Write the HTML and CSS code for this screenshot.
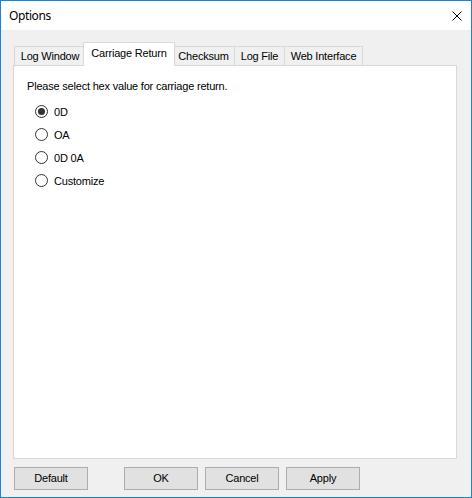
FILE: index.html
```html
<!DOCTYPE html>
<html>
<head>
<meta charset="utf-8">
<link rel="stylesheet" href="styles.css">
</head>
<body>
<div class="window">
  <div class="titlebar">
    <span class="title">Options</span>
    <svg class="close" width="10" height="10" viewBox="0 0 10 10"><path d="M0.5 0.5 L9.5 9.5 M9.5 0.5 L0.5 9.5" stroke="#000" stroke-width="1" fill="none"/></svg>
  </div>
  <div class="body">
    <div class="tabs">
      <div class="tab t1">Log Window</div>
      <div class="tab t2 active">Carriage Return</div>
      <div class="tab t3">Checksum</div>
      <div class="tab t4">Log File</div>
      <div class="tab t5">Web Interface</div>
    </div>
    <div class="panel">
      <div class="prompt">Please select hex value for carriage return.</div>
      <div class="radios">
        <div class="radio-row"><span class="radio checked"></span><span class="label">0D</span></div>
        <div class="radio-row"><span class="radio"></span><span class="label">OA</span></div>
        <div class="radio-row"><span class="radio"></span><span class="label">0D 0A</span></div>
        <div class="radio-row"><span class="radio"></span><span class="label">Customize</span></div>
      </div>
    </div>
    <div class="buttons">
      <div class="btn btn-default">Default</div>
      <div class="btn btn-ok">OK</div>
      <div class="btn">Cancel</div>
      <div class="btn">Apply</div>
    </div>
  </div>
</div>
</body>
</html>
```
FILE: styles.css
```css
html, body {
  margin: 0;
  padding: 0;
}
body {
  width: 472px;
  height: 498px;
  font-family: "Liberation Sans", Arial, sans-serif;
  font-size: 11px;
  letter-spacing: -0.2px;
  color: #000;
}
.window {
  box-sizing: border-box;
  width: 472px;
  height: 498px;
  border: 1px solid #1883d7;
  background: #f0f0f0;
  display: flex;
  flex-direction: column;
}
.titlebar {
  height: 29px;
  background: #fff;
  display: flex;
  align-items: center;
  justify-content: space-between;
  padding: 0 9px 0 8px;
}
.title {
  font-family: "Noto Sans", "Open Sans", sans-serif;
  font-size: 12px;
  letter-spacing: -0.4px;
}
.close {
  display: block;
}
.body {
  flex: 1;
  display: flex;
  flex-direction: column;
  padding: 12px 0 7px 12px;
}
.tabs {
  display: flex;
  align-items: flex-end;
  height: 23px;
  margin-left: 1px;
}
.tab {
  box-sizing: border-box;
  height: 19px;
  border: 1px solid #d9d9d9;
  border-bottom: 0;
  margin-left: -1px;
  text-align: center;
  line-height: 18px;
  white-space: nowrap;
  background: #f0f0f0;
}
.t1 { width: 72px; margin-left: 0; }
.t3 { width: 63px; }
.t4 { width: 51px; }
.t5 { width: 79px; }
.tab.active {
  width: 92px;
  height: 24px;
  margin: 0 -2px -1px -3px;
  padding-top: 1px;
  background: #fff;
  position: relative;
  z-index: 1;
}
.panel {
  box-sizing: border-box;
  width: 444px;
  height: 394px;
  border: 1px solid #d9d9d9;
  background: #fff;
  padding: 14px 0 0 13px;
}
.prompt {
  line-height: 13px;
}
.radios {
  margin-top: 7px;
}
.radio-row {
  height: 23px;
  display: flex;
  align-items: center;
  padding-left: 8px;
}
.radio {
  box-sizing: border-box;
  width: 13px;
  height: 13px;
  border: 1px solid #333;
  border-radius: 50%;
  margin-right: 6px;
  display: flex;
  align-items: center;
  justify-content: center;
}
.radio.checked::after {
  content: "";
  width: 7px;
  height: 7px;
  border-radius: 50%;
  background: #333;
}
.buttons {
  display: flex;
  margin-top: 8px;
  margin-left: 1px;
  gap: 7px;
}
.btn {
  box-sizing: border-box;
  width: 74px;
  height: 23px;
  border: 1px solid #adadad;
  background: #e1e1e1;
  text-align: center;
  line-height: 21px;
}
.btn-ok {
  margin-left: 29px;
}
```
